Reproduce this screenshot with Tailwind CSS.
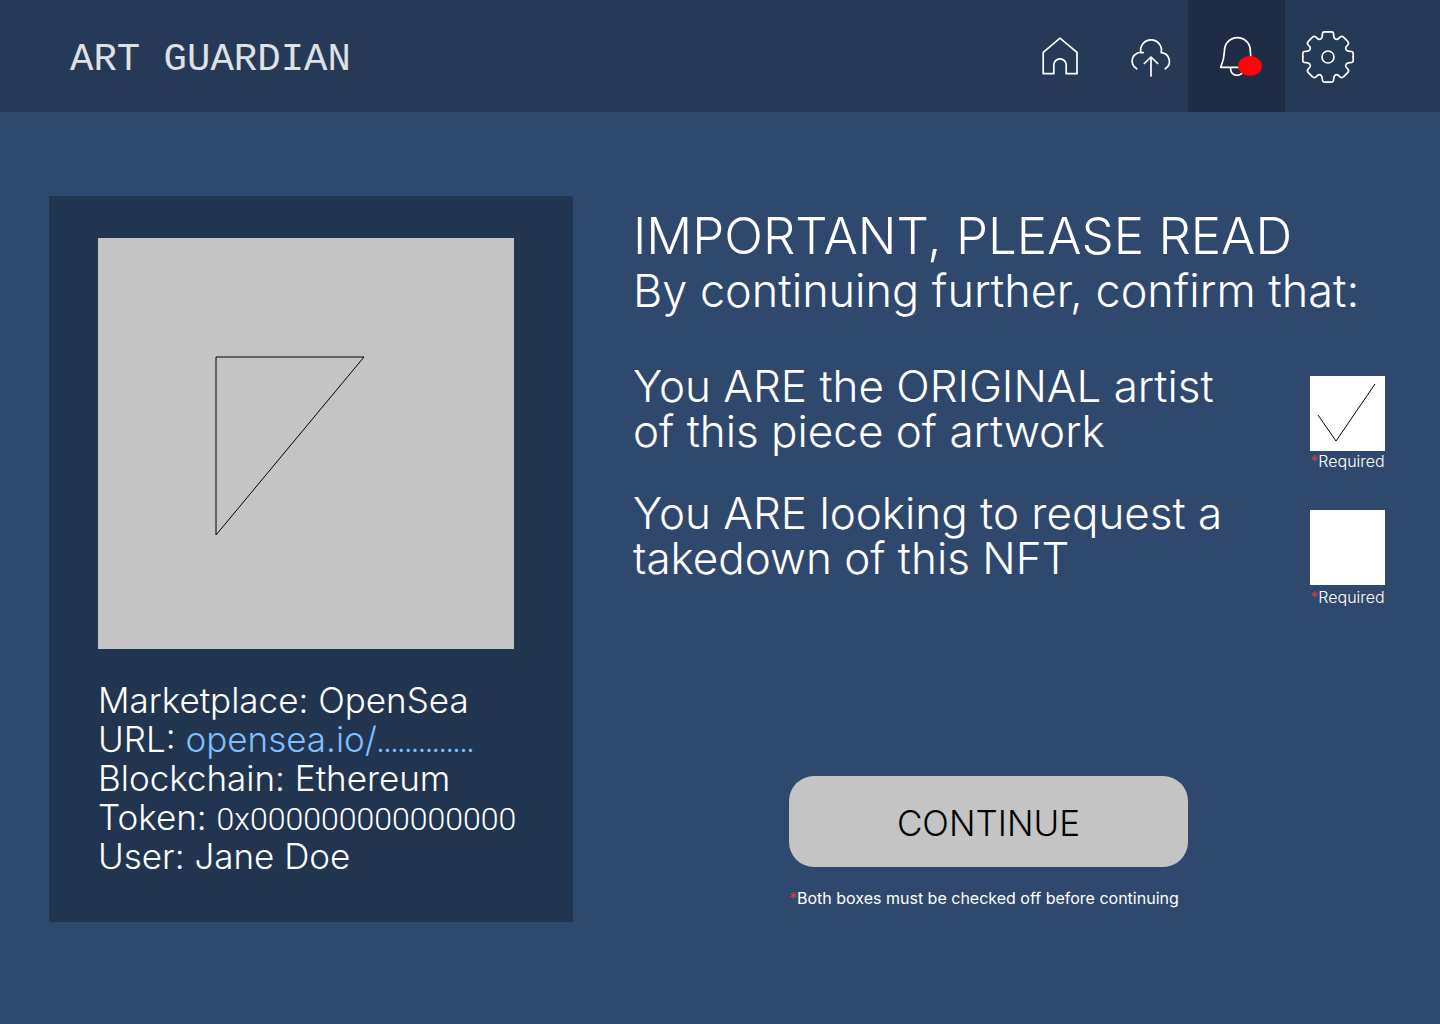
<!DOCTYPE html>
<html lang="en">
<head>
<meta charset="utf-8">
<meta name="viewport" content="width=device-width, initial-scale=1">
<title>Art Guardian</title>
<script src="https://cdn.jsdelivr.net/npm/@tailwindcss/browser@4"></script>
</head>
<body class="min-h-screen bg-[#2f496e] text-white font-['Inter',sans-serif] font-light">
<header class="flex h-28 items-stretch justify-between bg-[#263956] pl-[70px] pr-[69px]">
  <a href="#" class="flex items-center pt-2 text-[39px] text-white/85 font-['Liberation_Mono',monospace] whitespace-pre">ART GUARDIAN</a>
  <nav class="flex" aria-label="Main">
    <a href="#" aria-label="Home" class="mr-[17px] flex w-[74px] items-center justify-center">
      <svg class="size-14" viewBox="1032 28 56 56" fill="none" stroke="white" stroke-width="1.7" stroke-linejoin="round"><path d="M1043.2 52.4L1060 38.2l17 14.2v21.3h-10.800V65a6.200 6.200 0 0 0-12.400 0v8.700H1043.200z"/></svg>
    </a>
    <a href="#" aria-label="Upload" class="flex w-[74px] items-center justify-center">
      <svg class="size-14" viewBox="1123 28 56 56" fill="none" stroke="white" stroke-width="1.7" stroke-linecap="round" stroke-linejoin="round"><path d="M1136.700 68.800A8.800 8.800 0 0 1 1143.300 52.600H1140.900A10.400 10.400 0 1 1 1161.200 52.600A8.800 8.800 0 0 1 1165.300 68.800M1151 76V57.200M1144.300 63.500L1151 57L1157.700 63.500"/></svg>
    </a>
    <a href="#" aria-label="Notifications" aria-current="page" class="flex w-[97px] items-center justify-center bg-[#1f2c45]">
      <svg class="size-14" viewBox="1209 28 56 56" fill="none" stroke="white" stroke-width="1.7" stroke-linejoin="round"><path d="M1220.700 67.300C1223 62 1224.300 58 1224.500 50.500A12.800 12.800 0 0 1 1250.300 50.500C1250.500 58 1251.500 62 1254 67.300zM1230.700 67.500V70A6.400 6.400 0 0 0 1243.300 70V67.500"/><ellipse cx="1250" cy="66" rx="12" ry="10" fill="#ff0509" stroke="none"/></svg>
    </a>
    <a href="#" aria-label="Settings" class="flex w-[86px] items-center justify-center">
      <svg class="size-14" viewBox="-28 -29 56 56" fill="none" stroke="white" stroke-width="1.7" stroke-linejoin="round" stroke-linecap="round">
        <defs><path id="tooth" d="M0-25.200H3.500Q5.300-25.200 5.500-23.500C5.700-20.500 5.500-19.500 7-18.300Q8.500-17.200 10-18L12-19.800Q13.800-21.300 15.700-19.700L19.700-15.700Q21.300-13.800 19.800-12L18-10Q17.200-8.500 18.300-7C19.500-5.500 20.500-5.700 23.500-5.500Q25.200-5.300 25.200-3.500V0"/></defs>
        <use href="#tooth"/><use href="#tooth" transform="rotate(90)"/><use href="#tooth" transform="rotate(180)"/><use href="#tooth" transform="rotate(270)"/><circle r="6"/>
      </svg>
    </a>
  </nav>
</header>

<main class="grid grid-cols-[minmax(0,524fr)_minmax(0,752fr)] gap-[60px] pt-[84px] pr-[55px] pb-[102px] pl-[49px]">
  <section class="bg-[#223550] pt-[42px] pr-[59px] pb-[46px] pl-[49px]">
    <svg class="w-full bg-[#c4c4c4]" viewBox="0 0 416 411" fill="none" stroke="black" role="img" aria-label="Artwork preview"><path d="M118 119H266L118 297z"/></svg>
    <div class="mt-8 text-[35px] leading-[39px] whitespace-nowrap">
      <p>Marketplace: OpenSea</p>
      <p>URL: <a href="#" class="text-[#7fbfff]">opensea.io/<span class="text-2xl leading-none font-normal">..............</span></a></p>
      <p>Blockchain: Ethereum</p>
      <p>Token: <span class="text-[32px] leading-none font-['Roboto',sans-serif]">0x000000000000000</span></p>
      <p>User: Jane Doe</p>
    </div>
  </section>

  <form class="pt-[10px]">
    <h1 class="text-[51px] leading-[60px] whitespace-nowrap">IMPORTANT, PLEASE READ</h1>
    <p class="text-[45px] leading-[50px] whitespace-nowrap">By continuing further, confirm that:</p>

    <div class="mt-12 flex items-start justify-between">
      <label for="artist" class="text-[44px] leading-[45px] whitespace-nowrap">You ARE the ORIGINAL artist<br>of this piece of artwork</label>
      <div class="w-[75px] shrink-0 pt-3">
        <div class="relative">
          <input id="artist" type="checkbox" required checked class="peer block size-[75px] appearance-none bg-white">
          <svg class="pointer-events-none absolute inset-0 hidden size-[75px] peer-checked:block" viewBox="0 0 75 75" fill="none" stroke="black"><path d="M8 39L26 65L65 8"/></svg>
        </div>
        <p class="text-center text-base leading-5 whitespace-nowrap"><span class="text-[#e0393e]">*</span>Required</p>
      </div>
    </div>

    <div class="mt-5 flex items-start justify-between">
      <label for="takedown" class="text-[44px] leading-[45px] whitespace-nowrap">You ARE looking to request a<br>takedown of this NFT</label>
      <div class="w-[75px] shrink-0 pt-[19px]">
        <div class="relative">
          <input id="takedown" type="checkbox" required class="peer block size-[75px] appearance-none bg-white">
          <svg class="pointer-events-none absolute inset-0 hidden size-[75px] peer-checked:block" viewBox="0 0 75 75" fill="none" stroke="black"><path d="M8 39L26 65L65 8"/></svg>
        </div>
        <p class="mt-[2px] text-center text-base leading-5 whitespace-nowrap"><span class="text-[#e0393e]">*</span>Required</p>
      </div>
    </div>

    <div class="mt-[169px] ml-[156px] w-[399px]">
      <button type="submit" class="block h-[91px] w-full rounded-[25px] bg-[#c4c4c4] pt-1 text-[35px] text-black">CONTINUE</button>
      <p class="mt-[21px] text-base leading-5 font-normal whitespace-nowrap"><span class="text-[#e0393e]">*</span>Both boxes must be checked off before continuing</p>
    </div>
  </form>
</main>
</body>
</html>
